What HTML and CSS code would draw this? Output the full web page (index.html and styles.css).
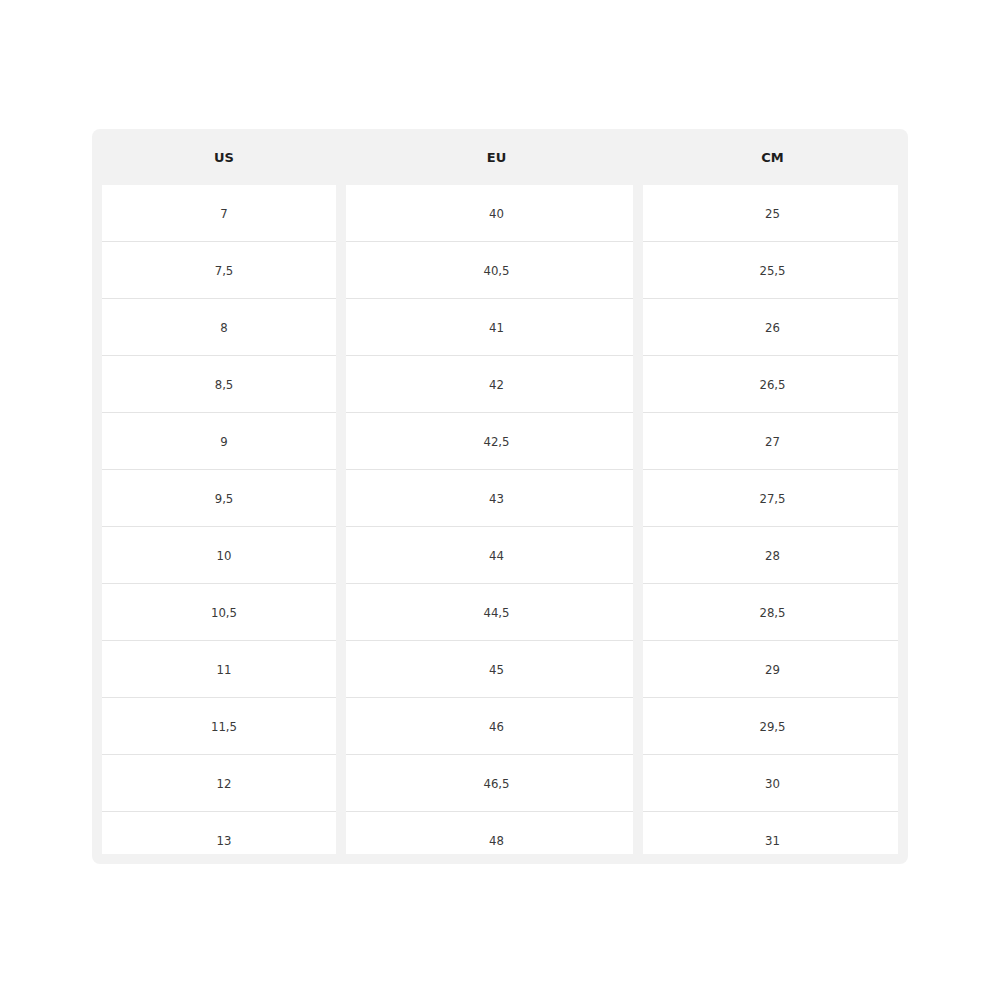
FILE: index.html
```html
<!DOCTYPE html>
<html>
<head>
<meta charset="utf-8">
<link rel="stylesheet" href="styles.css">
</head>
<body>
<div class="chart">
  <div class="head">
    <div class="hcell">US</div>
    <div class="hcell">EU</div>
    <div class="hcell">CM</div>
  </div>
  <div class="body">
    <div class="col">
      <div class="cell">7</div><div class="cell">7,5</div><div class="cell">8</div><div class="cell">8,5</div><div class="cell">9</div><div class="cell">9,5</div><div class="cell">10</div><div class="cell">10,5</div><div class="cell">11</div><div class="cell">11,5</div><div class="cell">12</div><div class="cell last">13</div>
    </div>
    <div class="col">
      <div class="cell">40</div><div class="cell">40,5</div><div class="cell">41</div><div class="cell">42</div><div class="cell">42,5</div><div class="cell">43</div><div class="cell">44</div><div class="cell">44,5</div><div class="cell">45</div><div class="cell">46</div><div class="cell">46,5</div><div class="cell last">48</div>
    </div>
    <div class="col">
      <div class="cell">25</div><div class="cell">25,5</div><div class="cell">26</div><div class="cell">26,5</div><div class="cell">27</div><div class="cell">27,5</div><div class="cell">28</div><div class="cell">28,5</div><div class="cell">29</div><div class="cell">29,5</div><div class="cell">30</div><div class="cell last">31</div>
    </div>
  </div>
</div>
</body>
</html>
```
FILE: styles.css
```css
html, body {
  margin: 0;
  padding: 0;
  background: #ffffff;
}
body {
  padding: 129px 0 0 92px;
  font-family: "DejaVu Sans Condensed", "DejaVu Sans", sans-serif;
}
.chart {
  width: 816px;
  box-sizing: border-box;
  background: #f2f2f2;
  border-radius: 8px;
  padding: 0 10px 10px 10px;
}
.head, .body {
  display: grid;
  grid-template-columns: 234px 287px 255px;
  column-gap: 10px;
}
.hcell {
  height: 56px;
  display: flex;
  align-items: center;
  justify-content: center;
  padding-left: 10px;
  font-weight: bold;
  font-size: 13px;
  color: #1e1e1e;
  font-family: "DejaVu Sans", sans-serif;
}
.col {
  background: #ffffff;
  display: flex;
  flex-direction: column;
}
.cell {
  height: 56px;
  border-bottom: 1px solid #e4e4e4;
  display: flex;
  align-items: center;
  justify-content: center;
  padding-left: 10px;
  font-size: 13px;
  color: #3a3a3a;
}
.hcell:nth-child(2), .col:nth-child(2) .cell {
  padding-left: 14px;
}
.hcell:nth-child(3), .col:nth-child(3) .cell {
  padding-left: 4px;
}
.cell.last {
  height: 42px;
  border-bottom: none;
  align-items: flex-start;
  padding-top: 21px;
  box-sizing: border-box;
  line-height: 16px;
}
```
